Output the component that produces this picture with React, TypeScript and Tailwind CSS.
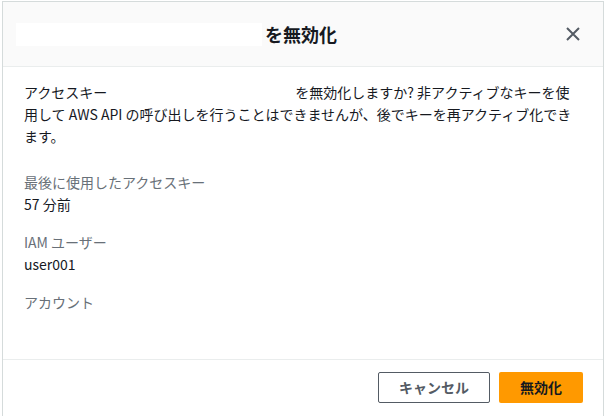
import React from 'react';

const font = { fontFamily: '"Noto Sans CJK JP", "Open Sans", sans-serif' };

const Field: React.FC<{ label: string; value?: string }> = ({ label, value }) => (
  <div className="flex flex-col">
    <div className="h-[22px] text-[14px] leading-[22px] text-[#687078]">{label}</div>
    <div className="h-[22px] text-[14px] leading-[22px] text-[#16191f]">{value}</div>
  </div>
);

const App: React.FC = () => {
  return (
    <div className="h-[416px] w-[604px] overflow-hidden bg-white pt-[1px] pl-[2px]" style={font}>
      <div className="h-[420px] w-[602px] border-x border-t border-[#d5dbdb] bg-white">
        <header className="flex h-[65px] items-center justify-between border-b border-[#eaeded] bg-[#fafafa] pl-[13px] pr-[20px]">
          <div className="flex items-center">
            <span className="mr-[3px] inline-block h-[23px] w-[246px] bg-white" />
            <h2 className="text-[18px] font-bold leading-[24px] text-[#16191f]">を無効化</h2>
          </div>
          <button type="button" className="grid h-[20px] w-[20px] place-items-center text-[#545b64]">
            <svg width="14" height="14" viewBox="0 0 14 14" fill="none" stroke="currentColor" strokeWidth="2">
              <path d="M1 1 13 13M13 1 1 13" />
            </svg>
          </button>
        </header>

        <main className="h-[292px] px-[21px] pt-[14px]">
          <p className="w-[551px] text-[14px] leading-[22px] text-[#16191f]">
            アクセスキー<span className="inline-block w-[188px]" />を無効化しますか? 非アクティブなキーを使用して AWS API の呼び出しを行うことはできませんが、後でキーを再アクティブ化できます。
          </p>
          <div className="mt-[24px] flex flex-col gap-[16px]">
            <Field label="最後に使用したアクセスキー" value="57 分前" />
            <Field label="IAM ユーザー" value="user001" />
            <Field label="アカウント" />
          </div>
        </main>

        <footer className="flex justify-end gap-[9px] border-t border-[#eaeded] pr-[20px] pt-[12px]">
          <button
            type="button"
            className="h-[31px] w-[112px] rounded-[2px] border border-[#545b64] bg-white text-[14px] font-bold text-[#545b64]"
          >
            キャンセル
          </button>
          <button
            type="button"
            className="h-[31px] w-[84px] rounded-[2px] bg-[#ff9900] text-[14px] font-bold text-[#16191f]"
          >
            無効化
          </button>
        </footer>
      </div>
    </div>
  );
};

export default App;
